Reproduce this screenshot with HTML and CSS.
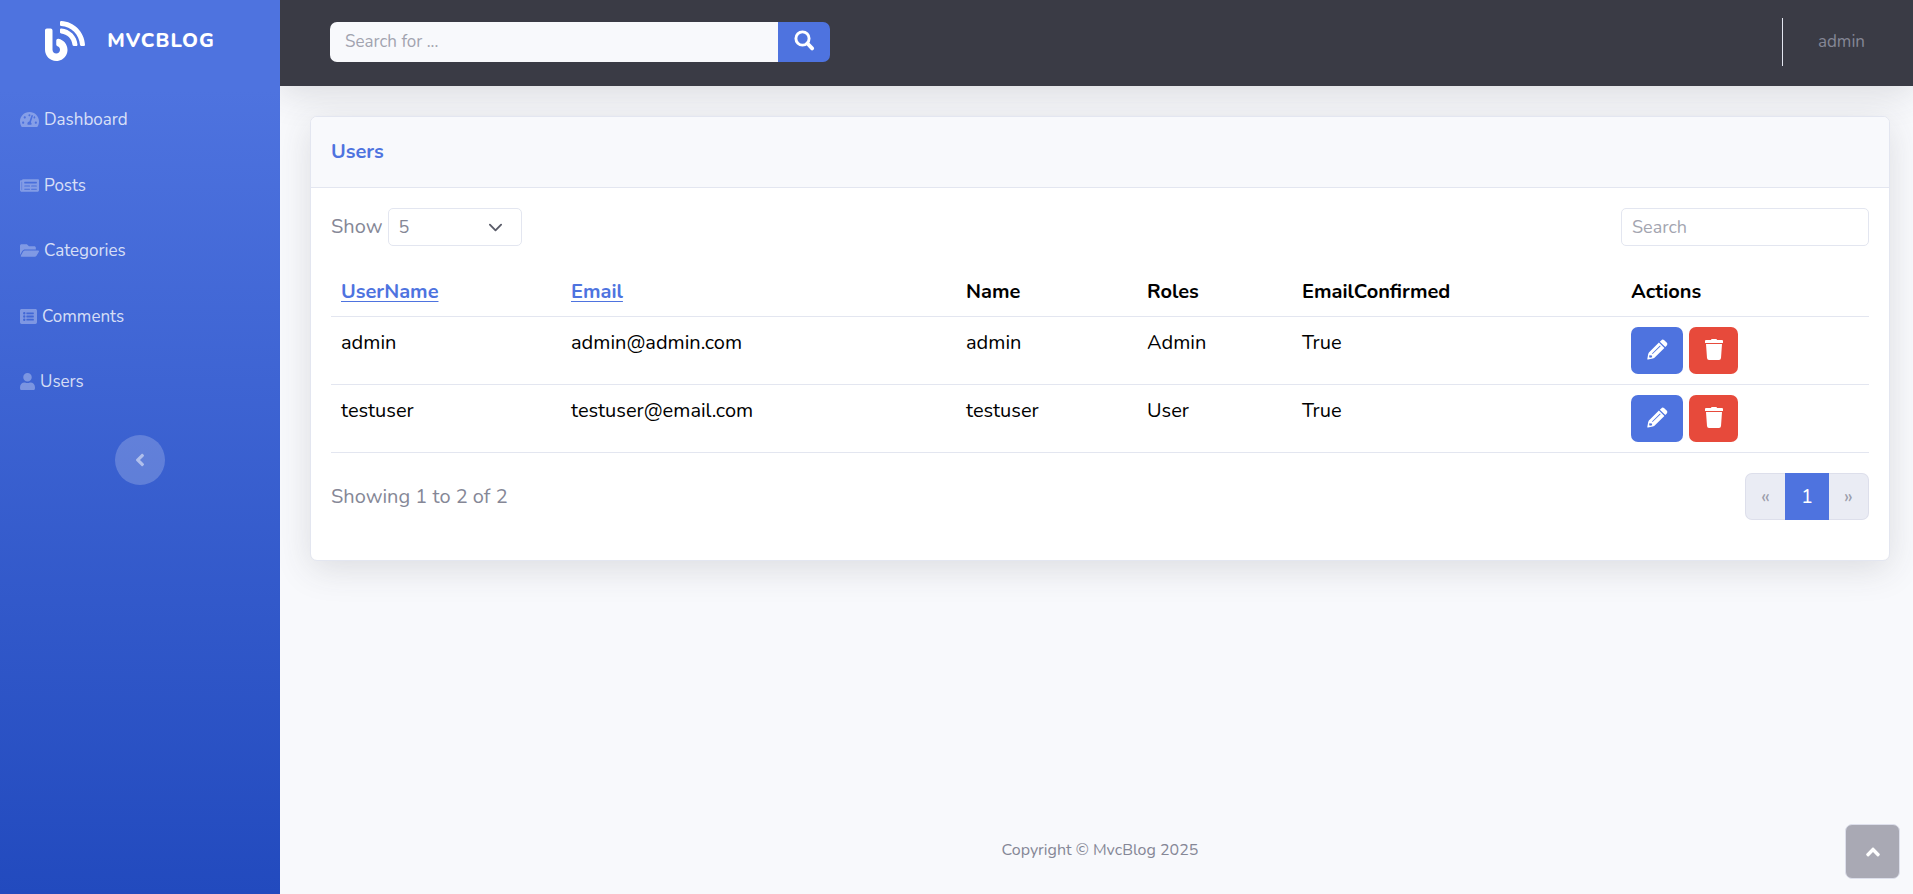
FILE: index.html
```html
<!DOCTYPE html>
<html lang="en">
<head>
<meta charset="utf-8">
<meta name="viewport" content="width=device-width, initial-scale=1">
<title>MvcBlog - Users</title>
<link rel="stylesheet" href="styles.css">
</head>
<body>
<svg class="sprite" aria-hidden="true">
  <symbol id="pencil" viewBox="0 0 21 21">
    <path fill="currentColor" fill-rule="evenodd" d="M14.2 1.4 Q15.6 0 17 1.1 L19.9 3.8 Q21 5.1 19.8 6.6 L18.3 8.1 L12.8 2.8 Z M11.9 3.6 L17.4 8.9 L7.2 18.9 L5.8 19.6 L1 20.6 Q.2 20.7 .3 20 L1.2 15 L1.9 13.5 Z M13 6.6 L5 14.4 L5.6 15 L13.600 7.200 Z M2.6 15.9 L2.1 18.1 L2.9 18.8 L5.1 18.2 L5 16.6 L3.9 16.5 Z"/>
  </symbol>
  <symbol id="trash" viewBox="0 0 18 21">
    <path fill="currentColor" d="M6 1 Q6 0 7 0 H11 Q12 0 12 1 H17 Q18 1 18 2 V4 H0 V2 Q0 1 1 1 Z M1 5 H17 L16 19 Q15.800 21 14 21 H4 Q2.200 21 2 19 Z"/>
  </symbol>
</svg>
<div class="page">
  <nav class="sidebar" aria-label="Main">
    <a class="brand" href="#">
      <svg class="brand-icon" viewBox="0 0 512 512" fill="currentColor" aria-hidden="true"><path d="M172.2 226.8c-14.6-2.9-28.2 8.9-28.2 23.8V301c0 10.2 7.1 18.4 16.7 22 18.2 6.8 31.3 24.4 31.3 45 0 26.5-21.5 48-48 48s-48-21.5-48-48V120c0-13.3-10.7-24-24-24H24c-13.300 0-24 10.7-24 24v248c0 89.5 82.1 160.2 175 140.7 54.4-11.4 98.3-55.4 109.7-109.7 17.4-82.9-37-157.2-112.500-172.200zM209 0c-9.200-.5-17 6.8-17 16v31.600c0 8.500 6.600 15.500 15 15.900 129.400 7 233.400 112 240.900 241.500.5 8.400 7.500 15 15.900 15h32.100c9.200 0 16.500-7.800 16-17C503.400 139.800 372.200 8.600 209 0zm.3 96c-9.300-.7-17.300 6.700-17.300 16.100v32.100c0 8.400 6.500 15.300 14.800 15.900 76.800 6.300 138 68.200 144.900 145.200.8 8.300 7.600 14.700 15.900 14.700h32.200c9.300 0 16.800-8 16.100-17.300-8.400-110.100-96.500-198.200-206.600-206.700z"/></svg>
      <span>MVCBLOG</span>
    </a>
    <ul class="nav-list">
      <li><a class="nav-link" href="#"><svg class="icon-wide" viewBox="0 0 576 512" fill="currentColor" aria-hidden="true"><path d="M288 32C128.94 32 0 160.94 0 320c0 52.8 14.25 102.26 39.06 144.8 5.61 9.62 16.3 15.2 27.44 15.2h443c11.14 0 21.83-5.58 27.44-15.2C561.75 422.26 576 372.8 576 320c0-159.06-128.94-288-288-288zm0 64c14.71 0 26.58 10.13 30.32 23.65-1.11 2.26-2.64 4.23-3.45 6.67l-9.22 27.67c-5.13 3.49-10.97 6.01-17.64 6.01-17.67 0-32-14.33-32-32S270.33 96 288 96zM96 384c-17.67 0-32-14.33-32-32s14.33-32 32-32 32 14.33 32 32-14.33 32-32 32zm48-160c-17.67 0-32-14.33-32-32s14.33-32 32-32 32 14.33 32 32-14.33 32-32 32zm246.77-72.41l-61.33 184C343.13 347.33 352 364.54 352 384c0 11.72-3.38 22.55-8.88 32H232.88c-5.5-9.45-8.88-20.28-8.88-32 0-33.94 26.5-61.43 59.9-63.59l61.34-184.01c4.17-12.56 17.73-19.45 30.36-15.17 12.57 4.19 19.35 17.79 15.17 30.36zm14.66 57.2l15.52-46.55c3.47-1.29 7.13-2.23 11.05-2.23 17.67 0 32 14.33 32 32s-14.33 32-32 32c-11.38-.01-20.89-6.28-26.57-15.22zM480 384c-17.67 0-32-14.33-32-32s14.33-32 32-32 32 14.33 32 32-14.33 32-32 32z"/></svg><span>Dashboard</span></a></li>
      <li><a class="nav-link" href="#"><svg class="icon-wide" viewBox="0 0 576 512" fill="currentColor" aria-hidden="true"><path fill-rule="evenodd" d="M552 64H88c-13.300 0-24 10.700-24 24v8H24c-13.300 0-24 10.700-24 24v272c0 30.900 25.100 56 56 56h472c26.500 0 48-21.500 48-48V88c0-13.300-10.700-24-24-24zM56 400a8 8 0 0 1-8-8V144h16v248a8 8 0 0 1-8 8zM140 352h152a12 12 0 0 1 12 12v8a12 12 0 0 1-12 12H140a12 12 0 0 1-12-12v-8a12 12 0 0 1 12-12zM348 352h152a12 12 0 0 1 12 12v8a12 12 0 0 1-12 12H348a12 12 0 0 1-12-12v-8a12 12 0 0 1 12-12zM140 256h152a12 12 0 0 1 12 12v8a12 12 0 0 1-12 12H140a12 12 0 0 1-12-12v-8a12 12 0 0 1 12-12zM348 256h152a12 12 0 0 1 12 12v8a12 12 0 0 1-12 12H348a12 12 0 0 1-12-12v-8a12 12 0 0 1 12-12zM140 144h360a12 12 0 0 1 12 12v24a12 12 0 0 1-12 12H140a12 12 0 0 1-12-12v-24a12 12 0 0 1 12-12z"/></svg><span>Posts</span></a></li>
      <li><a class="nav-link" href="#"><svg class="icon-wide" viewBox="0 0 576 512" fill="currentColor" aria-hidden="true"><path d="M572.694 292.093L500.27 416.248A63.997 63.997 0 0 1 444.989 448H45.025c-18.523 0-30.064-20.093-20.731-36.093l72.424-124.155A64 64 0 0 1 152 256h399.964c18.523 0 30.064 20.093 20.73 36.093zM152 224h328v-48c0-26.51-21.49-48-48-48H272l-64-64H48C21.49 64 0 85.49 0 112v278.046l69.077-118.418C86.214 242.25 117.989 224 152 224z"/></svg><span>Categories</span></a></li>
      <li><a class="nav-link" href="#"><svg class="icon-square" viewBox="0 0 512 512" fill="currentColor" aria-hidden="true"><path fill-rule="evenodd" d="M464 480H48c-26.500 0-48-21.500-48-48V80c0-26.500 21.500-48 48-48h416c26.500 0 48 21.500 48 48v352c0 26.500-21.500 48-48 48zM128 124a36 36 0 1 0 0 72a36 36 0 1 0 0-72zM128 220a36 36 0 1 0 0 72a36 36 0 1 0 0-72zM128 316a36 36 0 1 0 0 72a36 36 0 1 0 0-72zM204 132h200a12 12 0 0 1 12 12v32a12 12 0 0 1-12 12H204a12 12 0 0 1-12-12v-32a12 12 0 0 1 12-12zM204 228h200a12 12 0 0 1 12 12v32a12 12 0 0 1-12 12H204a12 12 0 0 1-12-12v-32a12 12 0 0 1 12-12zM204 324h200a12 12 0 0 1 12 12v32a12 12 0 0 1-12 12H204a12 12 0 0 1-12-12v-32a12 12 0 0 1 12-12z"/></svg><span>Comments</span></a></li>
      <li><a class="nav-link" href="#"><svg class="icon-narrow" viewBox="0 0 448 512" fill="currentColor" aria-hidden="true"><path d="M224 256c70.7 0 128-57.3 128-128S294.7 0 224 0 96 57.3 96 128s57.3 128 128 128zm89.6 32h-16.7c-22.2 10.2-46.9 16-72.9 16s-50.6-5.8-72.9-16h-16.7C60.2 288 0 348.2 0 422.4V464c0 26.5 21.5 48 48 48h352c26.5 0 48-21.5 48-48v-41.6c0-74.2-60.2-134.4-134.4-134.4z"/></svg><span>Users</span></a></li>
    </ul>
    <button class="sidebar-toggle" type="button" aria-label="Collapse sidebar"><svg viewBox="0 0 256 512" fill="currentColor" aria-hidden="true"><path d="M31.7 239l136-136c9.400-9.400 24.600-9.400 33.900 0l22.600 22.600c9.400 9.400 9.400 24.600 0 33.900L127.900 256l96.400 96.400c9.400 9.400 9.400 24.600 0 33.900L201.700 409c-9.400 9.400-24.600 9.400-33.900 0l-136-136c-9.500-9.400-9.500-24.600-.1-34z"/></svg></button>
  </nav>
  <div class="content">
    <header class="topbar">
      <form class="site-search" role="search">
        <input type="search" placeholder="Search for ..." aria-label="Search the site">
        <button type="button" aria-label="Search"><svg viewBox="0 0 20 21" fill="none" stroke="currentColor" aria-hidden="true"><circle cx="8" cy="8.500" r="6.600" stroke-width="2.900"/><path d="M13 13.500 L17.600 18.400" stroke-width="3.800" stroke-linecap="round"/></svg></button>
      </form>
      <div class="account"><a href="#">admin</a></div>
    </header>
    <main>
      <section class="card">
        <header class="card-header"><h1>Users</h1></header>
        <div class="card-body">
          <div class="toolbar">
            <div class="page-size"><label for="size">Show</label>
              <select id="size"><option>5</option><option>10</option><option>25</option></select></div>
            <input class="filter" type="search" placeholder="Search" aria-label="Search users">
          </div>
          <table>
            <colgroup><col class="c-user"><col class="c-email"><col class="c-name"><col class="c-roles"><col class="c-confirmed"><col class="c-actions"></colgroup>
            <thead><tr><th><a href="#">UserName</a></th><th><a href="#">Email</a></th><th>Name</th><th>Roles</th><th>EmailConfirmed</th><th>Actions</th></tr></thead>
            <tbody>
              <tr><td>admin</td><td>admin@admin.com</td><td>admin</td><td>Admin</td><td>True</td><td><div class="actions"><button class="edit" type="button" aria-label="Edit admin"><svg><use href="#pencil"/></svg></button><button class="delete" type="button" aria-label="Delete admin"><svg><use href="#trash"/></svg></button></div></td></tr>
              <tr><td>testuser</td><td>testuser@email.com</td><td>testuser</td><td>User</td><td>True</td><td><div class="actions"><button class="edit" type="button" aria-label="Edit testuser"><svg><use href="#pencil"/></svg></button><button class="delete" type="button" aria-label="Delete testuser"><svg><use href="#trash"/></svg></button></div></td></tr>
            </tbody>
          </table>
          <div class="table-footer">
            <span>Showing 1 to 2 of 2</span>
            <nav class="pagination" aria-label="Pages"><a class="step" href="#" aria-label="Previous">«</a><a class="current" href="#" aria-current="page">1</a><a class="step" href="#" aria-label="Next">»</a></nav>
          </div>
        </div>
      </section>
    </main>
    <footer class="footer">Copyright © MvcBlog 2025</footer>
  </div>
</div>
<a class="to-top" href="#" aria-label="Back to top"><svg viewBox="0 0 320 512" fill="currentColor" aria-hidden="true"><path d="M177 159.700l136 136c9.400 9.400 9.400 24.600 0 33.900l-22.600 22.600c-9.400 9.400-24.600 9.400-33.900 0L160 255.900l-96.400 96.400c-9.400 9.400-24.600 9.400-33.900 0L7 329.700c-9.400-9.400-9.400-24.600 0-33.900l136-136c9.400-9.500 24.600-9.500 34-.1z"/></svg></a>
</body>
</html>
```
FILE: styles.css
```css
* { box-sizing: border-box; }
body {
  margin: 0;
  background: #f8f9fc;
  color: #858796;
  font-family: Nunito, Lato, sans-serif;
  font-size: 20px;
  line-height: 30px;
}
a { color: #4e73df; text-decoration-thickness: 1px; text-underline-offset: 3px; }
input, select, button { font: inherit; }
button { border: 0; padding: 0; cursor: pointer; }
.sprite { display: none; }
.page { display: flex; min-height: 100vh; }

.sidebar {
  position: relative;
  z-index: 1;
  flex: none;
  width: 280px;
  background: linear-gradient(180deg, #4e73df 10%, #224abe 100%);
}
.brand {
  display: flex;
  align-items: center;
  justify-content: center;
  gap: 22px;
  height: 87px;
  padding: 0 20px 5px 0;
  color: #fff;
  font-weight: 800;
  letter-spacing: 1px;
  text-decoration: none;
}
.brand-icon { width: 40px; height: 40px; }
.nav-list { margin: 0; padding: 0; list-style: none; }
.nav-link {
  display: flex;
  align-items: center;
  gap: 5px;
  padding: 20px;
  color: rgba(255, 255, 255, .8);
  font-size: 17px;
  line-height: 1.5;
  text-decoration: none;
}
.nav-link svg { height: 17px; opacity: .4; }
.icon-wide { width: 19px; }
.icon-square { width: 17px; }
.icon-narrow { width: 15px; }
.sidebar-toggle {
  display: flex;
  align-items: center;
  justify-content: center;
  width: 50px;
  height: 50px;
  margin: 20px auto;
  border-radius: 50%;
  background: rgba(255, 255, 255, .2);
  color: rgba(255, 255, 255, .5);
}
.sidebar-toggle svg { width: 12px; height: 20px; }

.content { display: flex; flex: 1; flex-direction: column; min-width: 0; }
.topbar {
  display: flex;
  align-items: center;
  justify-content: space-between;
  height: 86px;
  padding: 0 48px 2px 50px;
  background: #3a3b45;
  box-shadow: 0 8px 35px rgba(58, 59, 69, .15);
}
.site-search { display: flex; width: 500px; height: 40px; }
.site-search input {
  flex: 1;
  min-width: 0;
  padding: 0 15px;
  border: 0;
  border-radius: 7px 0 0 7px;
  background: #f8f9fc;
  color: #6e707e;
  font-size: 17px;
}
input::placeholder { color: #858796; opacity: .75; }
.site-search button {
  display: flex;
  align-items: flex-start;
  justify-content: center;
  width: 52px;
  padding-top: 8px;
  border-radius: 0 7px 7px 0;
  background: #4e73df;
  color: #fff;
}
.site-search svg { width: 21px; height: 21px; }
.account {
  display: flex;
  align-items: center;
  height: 48px;
  padding-left: 35px;
  border-left: 1px solid #e3e6f0;
}
.account a { color: #858796; font-size: 17px; text-decoration: none; }

main { flex: 1; padding: 30px 23px 30px 30px; }
.card {
  border: 1px solid #e3e6f0;
  border-radius: 7px;
  background: #fff;
  box-shadow: 0 8px 35px rgba(58, 59, 69, .15);
}
.card-header {
  padding: 20px;
  border-bottom: 1px solid #e3e6f0;
  border-radius: 6px 6px 0 0;
  background: #f8f9fc;
}
.card-header h1 { margin: 0; color: #4e73df; font-size: 20px; font-weight: 700; line-height: 30px; }
.card-body { padding: 20px 20px 40px; }
.toolbar, .table-footer { display: flex; align-items: center; justify-content: space-between; }
.page-size { display: flex; align-items: center; gap: 6px; }
.page-size select {
  width: 134px;
  height: 38px;
  padding: 0 9px;
  border: 1px solid #e3e6f0;
  border-radius: 5px;
  appearance: none;
  background: #fff url("data:image/svg+xml,%3Csvg xmlns='http://www.w3.org/2000/svg' viewBox='0 0 16 16'%3E%3Cpath fill='none' stroke='%235a5c69' stroke-linecap='round' stroke-linejoin='round' stroke-width='2' d='m2 5 6 6 6-6'/%3E%3C/svg%3E") no-repeat right 18px center / 15px;
  color: #858796;
  font-size: 18px;
}
.filter {
  width: 248px;
  height: 38px;
  padding: 0 10px;
  border: 1px solid #e3e6f0;
  border-radius: 5px;
  background: #fff;
  color: #6e707e;
  font-size: 18px;
}
table {
  width: 100%;
  margin: 20px 0;
  border-collapse: collapse;
  table-layout: fixed;
  color: #000;
  line-height: 32px;
}
th, td { padding: 10px; border-bottom: 1px solid #e3e6f0; text-align: left; vertical-align: top; }
th { padding-bottom: 8px; }
.c-user { width: 230px; }
.c-email { width: 395px; }
.c-name { width: 181px; }
.c-roles { width: 155px; }
.c-confirmed { width: 329px; }
.c-actions { width: 248px; }
.actions { display: flex; gap: 6px; }
.actions button {
  display: flex;
  align-items: flex-start;
  justify-content: center;
  height: 47px;
  padding-top: 12px;
  border-radius: 7px;
  color: #fff;
}
.edit { width: 52px; background: #4e73df; }
.delete { width: 49px; background: #e74a3b; }
.edit svg { width: 21px; height: 21px; }
.delete svg { width: 18px; height: 21px; }
.pagination { display: flex; height: 47px; }
.pagination a {
  display: flex;
  align-items: center;
  justify-content: center;
  width: 40px;
  text-decoration: none;
}
.pagination .step { border: 1px solid #dddfeb; background: #eaecf4; color: #9c9eab; }
.pagination .step:first-child { border-right: 0; border-radius: 7px 0 0 7px; }
.pagination .step:last-child { border-left: 0; border-radius: 0 7px 7px 0; }
.pagination .current { width: 44px; background: #4e73df; color: #fff; }

.footer { padding: 30px 23px 32px 30px; font-size: 16px; line-height: 24px; text-align: center; }
.to-top {
  position: fixed;
  right: 13px;
  bottom: 15px;
  display: flex;
  align-items: center;
  justify-content: center;
  width: 55px;
  height: 55px;
  border: 1px solid #dddfeb;
  border-radius: 7px;
  background: #a9a9b4;
  color: #fff;
}
.to-top svg { width: 14px; height: 22px; }
```
